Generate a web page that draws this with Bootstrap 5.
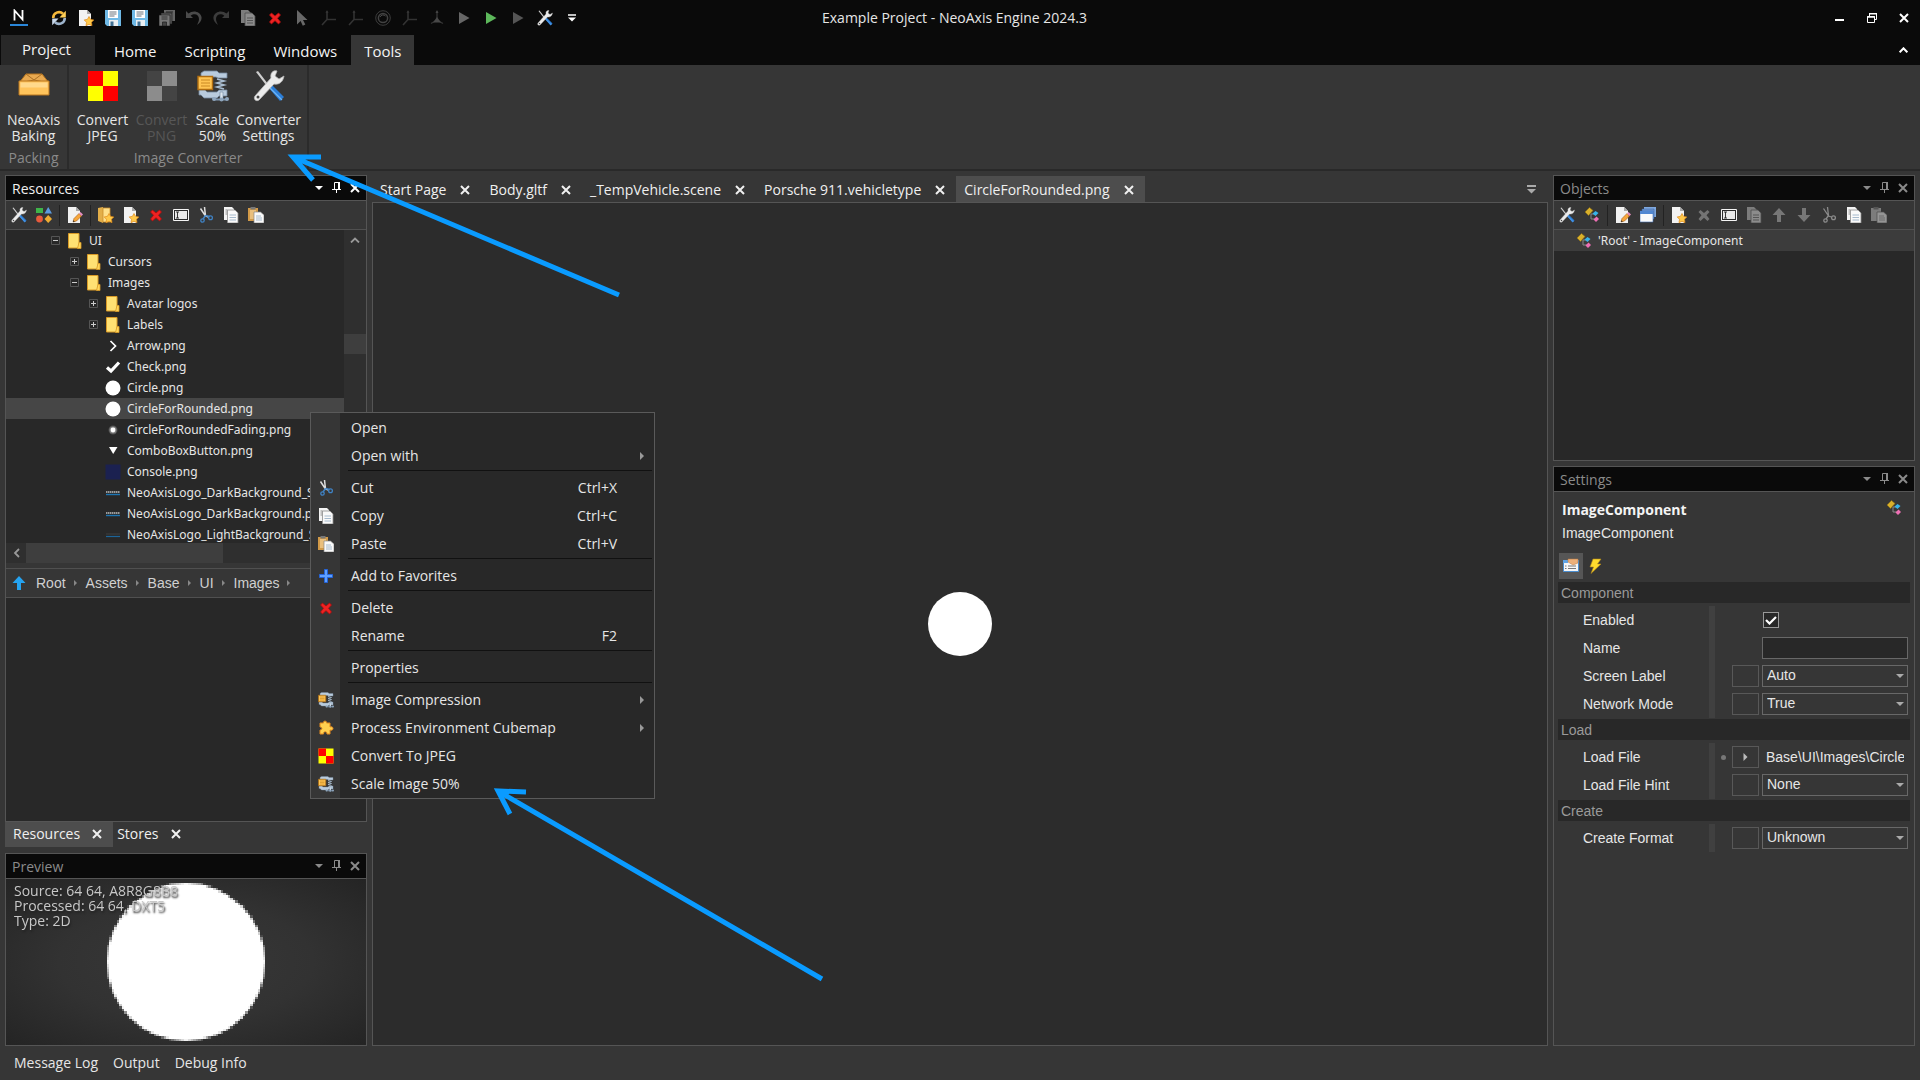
<!DOCTYPE html>
<html lang="en" data-bs-theme="dark">
<head>
<meta charset="utf-8">
<meta name="viewport" content="width=device-width, initial-scale=1">
<title>Example Project - NeoAxis Engine 2024.3</title>
<link href="https://cdn.jsdelivr.net/npm/bootstrap@5.3.0/dist/css/bootstrap.min.css" rel="stylesheet">
<style>
:root{--bg:#363636;--dark:#282828;--black:#0a0a0a;--line:#555;--fg:#e6e6e6;--dim:#8a8a8a}
body{background:var(--bg);color:var(--fg);font-family:"Open Sans","Noto Sans",sans-serif;font-size:14px;line-height:20px;min-height:100vh;overflow:hidden}
a{color:inherit;text-decoration:none}
button{background:none;border:0;padding:0;color:inherit;font:inherit}
svg{display:block;flex:none}
.i16{width:16px;height:16px}
.i32{width:32px;height:32px}
.defs{position:absolute;width:0;height:0}
.ibtn{display:flex;align-items:center;justify-content:center;flex:none}
/* title */
.titlebar{background:var(--black);height:35px}
.titlebar .side{flex:1 1 0}
.titlebar .ibtn{width:27px;height:34px}
.titlebar .wbtns .ibtn{width:32px}
.quick{padding-left:5px}
.quick .logo{margin-right:13px}
.menubar{background:var(--black);height:30px;font-size:15px}
.menubar .rtab{padding:2px 14px 0;height:30px;color:#f4f4f4;display:flex;align-items:center}
.menubar .rproject{background:#282828;width:94px;margin:0 5px 0 1px;padding:0 3px 2px 0;justify-content:center}
.menubar .ractive{background:var(--bg);padding:2px 13px 0}
/* ribbon */
.ribbon{height:106px;border-bottom:2px solid #292929}
.rgroup{border-right:2px solid #2b2b2b;padding:5px 4px 0}
.rgroup .rbtn{display:flex;flex-direction:column;align-items:center;line-height:16px;gap:10px;text-align:center;height:79px}
.rgroup .rname{color:var(--dim);text-align:center;line-height:18px}
.w59{width:59px}.w43{width:43px}.w69{width:69px}
.off{color:#575757}
/* docks */
.dock{width:362px;flex:none}
.workarea{padding:4px 5px 0;gap:5px}
.panel{border:1px solid var(--line);display:flex;flex-direction:column;min-height:0}
.gapped{margin-top:5px}
.objects{flex:0 0 286px}
.phead{background:var(--black);height:25px;border-bottom:1px solid var(--line);padding:0 2px 0 6px;color:var(--dim);display:flex;align-items:center}
.phead>span{padding-top:2px}
.phead.on{color:#f0f0f0}
.phead .ibtn{width:18px;height:22px}
.phead.on .ibtn{color:#fff}
.tools{height:29px;border-bottom:1px solid #505050;display:flex;align-items:center}
.tools .ibtn{width:25px;height:26px}
.tsep{width:6px;height:21px;display:flex;justify-content:center}
.tsep::before{content:"";width:1px;background:#222}
/* tree */
.treewrap{height:313px;background:var(--dark)}
.tree{overflow:hidden;font:12px/21px "Noto Sans",sans-serif}
.trow{height:21px;display:flex;align-items:center;white-space:nowrap}
.trow.sel{background:#464646}
.trow svg{margin-right:6px}
.trow .exp{width:9px;height:9px;margin-right:7px;margin-left:1px}
.l1{padding-left:44px}.l2{padding-left:63px}.l3{padding-left:82px}.lf{padding-left:99px}
.vscroll{width:22px;background:#2f2f2f;flex:none}
.vthumb{height:20px;background:#3e3e3e;margin-top:84px}
.sbtn{min-width:20px;height:20px}
.hscroll{height:20px;background:#2f2f2f}
.hthumb{width:197px;background:#3e3e3e}
.crumbs{height:30px;margin-top:5px;border-top:1px solid #505050;border-bottom:1px solid #505050;padding-left:5px;font:14px/28px "Liberation Sans",sans-serif;color:#d0d0d0}
.crumbs a{margin-left:9px}
.crumbs .cs{margin-left:8px}
.lower{background:var(--dark)}
.dtab{display:flex;align-items:center;height:26px;padding:2px 11px 0 8px;gap:14px;color:#f0f0f0;flex:none}
.dtab.act{background:#4d4d4d}
.bottomtabs{margin-bottom:1px}
.bottomtabs .dtab{height:25px;padding-top:0;padding-bottom:2px;gap:12px}
.bottomtabs .dtab+.dtab{padding-left:4px}
.doctabs{height:27px;padding-top:1px}
.viewer{border:1px solid var(--line);background:#2c2c2c}
.disc{width:64px;height:64px;background:#fff;border-radius:50%}
.preview{height:166px;position:relative;background:radial-gradient(ellipse at center,#383838 0,#323232 50%,#242424 100%)}
.preview canvas{width:158px;height:158px;image-rendering:pixelated}
.pinfo{position:absolute;left:8px;top:4px;line-height:15px;color:#c8c8c8;text-shadow:1px 2px 2px #222}
.statusbar{height:34px;padding:0 14px;gap:15px}
/* settings */
.sbody{font:14px/18px "Liberation Sans",sans-serif}
.stitle{font:bold 14px/20px "Open Sans",sans-serif;color:#f4f4f4}
.shead{padding:8px 12px 0 8px}
.modes{padding:11px 0 3px 5px}
.modes .ibtn{width:24px;height:26px}
.modes .on{background:#565656}
.cat{background:#282828;height:21px;line-height:22px;color:#9a9a9a;margin:0 4px 3px 4px;padding-left:3px}
.props{margin-bottom:1px}
.prow{height:28px;display:flex;align-items:center}
.prow .plabel{width:155px;padding-left:29px;flex:none}
.pdiv{width:6px;background:#404040;align-self:stretch;flex:none}
.pmark{width:17px;display:flex;justify-content:center;flex:none}
.pbtn{width:27px;height:22px;border:1px solid #585858;margin-right:3px;flex:none;display:flex;align-items:center;justify-content:center}
.pbtn.hid{visibility:hidden}
.fld{height:22px;border:1px solid #686868;border-radius:0;color:#e6e6e6;background:#363636;padding:0 4px 2px;font:14px/18px "Liberation Sans",sans-serif;appearance:none;width:100%;display:block}
.pval{flex:1;margin-right:6px;min-width:0;position:relative}
.pval svg{position:absolute;right:4px;top:9px}
input.fld{background:#282828}
input.fld.bare{border:0;background:none;padding-bottom:0}
.chk{appearance:none;width:16px;height:16px;border:1px solid #999;background:#282828;margin:0 0 0 1px;display:block}
.pval .tick{position:absolute;left:3px;right:auto;top:4px;pointer-events:none}
.objrow{background:#3c3c3c;height:21px;font:12px/21px "Noto Sans",sans-serif;padding-left:22px;gap:6px}
/* context menu */
.ctx{position:absolute;left:310px;top:412px;width:345px;border:1px solid #5a5a5a;background:linear-gradient(90deg,#363636 29px,#282828 29px);padding:1px 0 0}
.citem{height:28px;width:100%;display:flex;align-items:center;text-align:left;padding:0 10px 1px 7px}
.citem .ci{width:16px;height:16px;margin-right:17px;flex:none}
.citem .key{margin-right:27px}
.citem span{padding-top:1px}
.csep{height:4px;margin:0 2px 0 37px}
.csep::before{content:"";display:block;height:1px;background:#111}
.notes{position:absolute;left:0;top:0;pointer-events:none}
</style>
<script src="https://cdn.jsdelivr.net/npm/bootstrap@5.3.0/dist/js/bootstrap.bundle.min.js"></script>
</head>
<body class="d-flex flex-column">
<svg class="defs" aria-hidden="true">
<symbol id="refresh" viewBox="0 0 16 16"><path d="M2.200 8a5.800 5.800 0 0 1 9.800-4.200" fill="none" stroke="#f5b93c" stroke-width="2.600"/><path d="M14.800.8v6.700H8.500z" fill="#ffcf57"/><path d="M13.800 8a5.800 5.800 0 0 1-9.800 4.200" fill="none" stroke="#9db3cc" stroke-width="2.600"/><path d="M1.200 15.200V8.500h6.300z" fill="#c9d8ea"/></symbol>
<symbol id="page" viewBox="0 0 16 16"><path d="M1 0h8l4 4v12H1z" fill="#f2f2f2"/><path d="M9 0v4h4z" fill="#a9a9a9"/></symbol>
<symbol id="star" viewBox="0 0 16 16"><path d="M11 6.500l1.600 2.900 3.200.5-2.300 2.400.5 3.400-3-1.400-3 1.400.5-3.400-2.300-2.400 3.200-.5z" fill="#ffc94a" stroke="#e08a1a" stroke-width=".7"/></symbol>
<symbol id="newpage" viewBox="0 0 16 16"><use href="#page"/><use href="#star"/></symbol>
<symbol id="editpage" viewBox="0 0 16 16"><use href="#page"/><path d="M6 15l1-3.500 5-5 2.500 2.500-5 5z" fill="#f7a63b" stroke="#a25c12" stroke-width=".6"/><path d="M12 6.500l1.500-1.500L16 7.500 14.500 9z" fill="#e78fc0"/><path d="M6 15l.5-1.800 1.300 1.300z" fill="#222"/></symbol>
<symbol id="save" viewBox="0 0 16 16"><path d="M0 0h16v16H2l-2-2z" fill="#6fb9e6"/><path d="M3 0h10v8H3z" fill="#fff"/><path d="M4.500 2h7M4.500 4h7M4.500 6h5" stroke="#5a6570" stroke-width=".9"/><path d="M4 10h9v6H4z" fill="#e9eef2"/><path d="M5.500 11.500h3V16h-3z" fill="#3f6f92"/></symbol>
<symbol id="saveall" viewBox="0 0 16 16"><path d="M5 0h11v11H5z" fill="#666"/><path d="M7 2h7" stroke="#222"/><path d="M2 3h11v11H2z" fill="#5c5c5c" stroke="#151515" stroke-width=".6"/><path d="M0 5h11v11H0z" fill="#777" stroke="#151515" stroke-width=".6"/><path d="M2.500 7h6M2.500 9h6M3.500 12h4v4h-4z" stroke="#222" fill="#444" stroke-width=".8"/></symbol>
<symbol id="undo" viewBox="0 0 16 16"><path d="M0 1v7h7L4.700 5.700C8 3 13 4 13 9c0 2-1 4-2 6 3-2 5-5 4.500-8C14.500 1.500 7-.5 2.500 3.500z" fill="#4a4a4a"/></symbol>
<symbol id="redo" viewBox="0 0 16 16"><path transform="matrix(-1 0 0 1 16 0)" d="M0 1v7h7L4.700 5.700C8 3 13 4 13 9c0 2-1 4-2 6 3-2 5-5 4.500-8C14.500 1.500 7-.5 2.500 3.500z" fill="#3c3c3c"/></symbol>
<symbol id="copyoff" viewBox="0 0 16 16"><path d="M1 0h7l3 3v10H1z" fill="#7c7c7c"/><path d="M5 3h7l3 3v10H5z" fill="#8c8c8c" stroke="#4b4b4b" stroke-width=".8"/><path d="M7 8h6M7 10.500h6M7 13h6" stroke="#555"/></symbol>
<symbol id="copy" viewBox="0 0 16 16"><path d="M1 0h8l2 2v11H1z" fill="#f4f4f4"/><path d="M2.500 3h2M2.500 5h2M2.500 7h2" stroke="#8c8c8c"/><path d="M4.500 3h7.500l3 3v10H4.500z" fill="#fafafa" stroke="#8b8b8b" stroke-width=".8"/><path d="M6.500 8h6.500M6.500 10.500h6.500M6.500 13h6.500" stroke="#9cb2c7" stroke-width=".9"/></symbol>
<symbol id="paste" viewBox="0 0 16 16"><path d="M0 1h10v13H0z" fill="#d29a48"/><path d="M2 3h6v9H2z" fill="#e9bf7d"/><path d="M2.500 0h5v2.500h-5z" fill="#777"/><path d="M6 5h6.500L16 8v8H6z" fill="#fafafa" stroke="#888" stroke-width=".7"/><path d="M8 9h5M8 11h6M8 13h6" stroke="#9cb2c7" stroke-width=".9"/></symbol>
<symbol id="pasteoff" viewBox="0 0 16 16"><path d="M0 1h10v13H0z" fill="#7c7c7c"/><path d="M2.500 0h5v2.500h-5z" fill="#555"/><path d="M6 5h6.500L16 8v8H6z" fill="#959595" stroke="#4c4c4c" stroke-width=".7"/><path d="M8 9h5M8 11h6M8 13h6" stroke="#666" stroke-width=".9"/></symbol>
<symbol id="del" viewBox="0 0 16 16"><path d="M2.500 5l2-2L8 6l3.500-3 2 2-3 3.300 3 3.700-2 2L8 10.700 4.500 14l-2-2 3-3.700z" fill="#ee2222" stroke="#a80c0c" stroke-width=".8"/></symbol>
<symbol id="deloff" viewBox="0 0 16 16"><path d="M2.500 5l2-2L8 6l3.500-3 2 2-3 3.300 3 3.700-2 2L8 10.700 4.500 14l-2-2 3-3.700z" fill="#747474"/></symbol>
<symbol id="cursor" viewBox="0 0 16 16"><path d="M3 0l10.500 10H9l2.300 4.600-2.500 1.200-2.200-4.700L3 14.500z" fill="#686868"/></symbol>
<symbol id="axis" viewBox="0 0 16 16"><path d="M6 1v8.500h9M6 9.500L1 15" fill="none" stroke="#333" stroke-width="1.600"/><path d="M4.500 3L6 0l1.500 3z" fill="#333"/></symbol>
<symbol id="axis3" viewBox="0 0 16 16"><path d="M8 1v9l6 3.500M8 10l-6 3.500" fill="none" stroke="#333" stroke-width="1.400"/><path d="M8 7l4 5.500H4z" fill="#484848"/><path d="M6.500 3L8 0l1.500 3z" fill="#444"/></symbol>
<symbol id="rings" viewBox="0 0 16 16"><circle cx="8" cy="8" r="7.300" fill="none" stroke="#3c3c3c"/><circle cx="8" cy="8" r="4.600" fill="none" stroke="#424242" stroke-width="1.500"/><path d="M5 7a3.300 3.300 0 0 1 5.500-1" stroke="#505050" fill="none"/></symbol>
<symbol id="play" viewBox="0 0 16 16"><path d="M3 2l10.500 6L3 14z" fill="currentColor"/></symbol>
<symbol id="wrench" viewBox="0 0 32 32"><path d="M3 2l2-1 10 13-2 1z" fill="#cfcfcf"/><path d="M15 17l3-3 13 13-4 4z" fill="#2b7ed8"/><path d="M17 18l12 12" stroke="#6fb4f2" stroke-width="1.300"/><path d="M24 1c-4-1-7 2-6 7L2 26c-2 3 1 6 4 4L21 14c5 1 9-2 10-8l-5 3-4-3z" fill="#ececec" stroke="#bbb" stroke-width=".8"/><circle cx="5" cy="27" r="1.500" fill="#444"/></symbol>
<symbol id="shapes" viewBox="0 0 16 16"><path d="M0 1h7v5H0z" fill="#3fb44a"/><path d="M8.500 6.500L12.200 0 16 6.500z" fill="#5b9be0"/><circle cx="3.500" cy="12" r="3.400" fill="#e85a3c"/><path d="M12.200 8L16 12l-3.800 4-3.700-4z" fill="#efac32"/></symbol>
<symbol id="folder" viewBox="0 0 16 16"><path d="M1.500.5h10.500v14.500H1.500z" fill="#ffe173" stroke="#d99a27"/><path d="M12 9.500h2v6h-3.500z" fill="#ffd75a" stroke="#d99a27" stroke-width=".8"/></symbol>
<symbol id="newfolder" viewBox="0 0 16 16"><path d="M0 1l5-1v16l-5-2z" fill="#e3ae48"/><path d="M5 1h7v14H5z" fill="#ffe08a" stroke="#c98e2c" stroke-width=".8"/><use href="#star"/></symbol>
<symbol id="rename" viewBox="0 0 16 16"><path d="M.5 2.500h15v11H.5z" fill="#2a2a2a" stroke="#f5f5f5"/><path d="M2 4h12v8H2z" fill="#e9e9e9"/><path d="M3 5h3M4.500 5v6M3 11h3" stroke="#222" stroke-width=".9"/></symbol>
<symbol id="cut" viewBox="0 0 16 16"><path d="M2.500 1.500L7.500 9M6.500 0l1 9 3 1" stroke="#dedede" stroke-width="1.500" fill="none"/><path d="M7.500 8.500L5 12M7.500 8.500l4 1" stroke="#3f82c4" stroke-width="1.600"/><circle cx="4.500" cy="13.500" r="1.700" fill="none" stroke="#3f82c4" stroke-width="1.300"/><circle cx="12.500" cy="10.800" r="1.900" fill="none" stroke="#3f82c4" stroke-width="1.300"/></symbol>
<symbol id="cutoff" viewBox="0 0 16 16"><path d="M2.500 1.500L7.500 9M6.500 0l1 9 3 1M7.500 8.500L5 12" stroke="#8b8b8b" stroke-width="1.300" fill="none"/><circle cx="4.500" cy="13.500" r="1.700" fill="none" stroke="#8b8b8b" stroke-width="1.300"/><circle cx="12.500" cy="10.800" r="1.900" fill="none" stroke="#8b8b8b" stroke-width="1.300"/></symbol>
<symbol id="comp" viewBox="0 0 16 16"><path d="M7 7v5h5M7 7l3 0" stroke="#888" fill="none"/><path d="M1 5l4.500-4.500L9 3.500 4.500 8.500z" fill="#d9b02c" stroke="#8f7010" stroke-width=".6"/><path d="M8.500 6.500L11.500 4l3 2-3 3z" fill="#37b4ea"/><path d="M9.500 12.500l3-3L15 12l-3 3z" fill="#ee6fb4"/></symbol>
<symbol id="windows" viewBox="0 0 16 16"><path d="M4 0h12v10H4z" fill="#7fa8df"/><path d="M2 2h12v10H2z" fill="#6b97d6" stroke="#3a5e94" stroke-width=".5"/><path d="M0 4h13v11H0z" fill="#fbfbfb" stroke="#3f6cae" stroke-width=".6"/><path d="M0 4h13v3H0z" fill="#5288d2"/></symbol>
<symbol id="up" viewBox="0 0 16 16"><path d="M8 1l6.500 7H10v7H6V8H1.500z" fill="currentColor"/></symbol>
<symbol id="down" viewBox="0 0 16 16"><path d="M8 15l6.500-7H10V1H6v7H1.500z" fill="currentColor"/></symbol>
<symbol id="checker" viewBox="0 0 32 32"><path d="M1 1h30v30H1z" fill="#ff0"/><path d="M1 1h15v15H1zM16 16h15v15H16z" fill="red"/></symbol>
<symbol id="checkeroff" viewBox="0 0 32 32"><path d="M1 1h30v30H1z" fill="#8c8c8c"/><path d="M1 1h15v15H1zM16 16h15v15H16z" fill="#444"/></symbol>
<symbol id="box" viewBox="0 0 32 32"><path d="M1 13L8 4h16l7 9z" fill="#e8a950" stroke="#b9771f"/><path d="M8 4l8 6 8-6M1 13l15-3 15 3" fill="none" stroke="#a96f24"/><path d="M1 11h30v14H1z" fill="#ffc45c" stroke="#b9771f"/><path d="M2.500 12.500h27v5h-27z" fill="#ffd98c"/></symbol>
<symbol id="clamp" viewBox="0 0 32 32"><path d="M4 6V3l3-2h13l2 2h8v5h-9l-2-1H6z" fill="#b9cbdd" stroke="#73899f" stroke-width=".8"/><path d="M2 20h6l2 2h10l2-2h8v6h-8l-2 2H7l-3-3H2z" fill="#b9cbdd" stroke="#73899f" stroke-width=".8"/><path d="M20 9l7 2-7 2 7 2-7 2 7 2" fill="none" stroke="#a9bdd0" stroke-width="1.700"/><path d="M23 22h3v7h-3z" fill="#dce6ef" stroke="#6f879f" stroke-width=".6"/><path d="M17 29.500h13" stroke="#7e97b1" stroke-width="2"/><circle cx="17" cy="29" r="2" fill="#8fa6bd"/><circle cx="24.500" cy="29.500" r="2" fill="#8fa6bd"/><circle cx="30" cy="29" r="2" fill="#8fa6bd"/><path d="M1 6.500h14.500v13H1z" fill="#ffc553" stroke="#b06d10" stroke-width="1.400"/><path d="M4 10h9M4 13h9M4 16h9" stroke="#c98a25" stroke-width="1.200"/></symbol>
<symbol id="plus" viewBox="0 0 16 16"><path d="M6.500 1.500h3v5h5v3h-5v5h-3v-5h-5v-3h5z" fill="#5ea0ff" stroke="#2463d8"/></symbol>
<symbol id="puzzle" viewBox="0 0 16 16"><path d="M2 3h3.500C4.500.5 9.500.5 8.500 3H12v4c4-1.500 4 4.500 0 3v4H9c.5-3-4-3-3.500 0H2v-4c2.500 0 2.500-3 0-3z" fill="#ffd04f" stroke="#e38a20"/></symbol>
<symbol id="bolt" viewBox="0 0 16 16"><path d="M6 1h8l-3.500 5H14L4 15.500 6.500 9H3z" fill="#ffdc2e" stroke="#b3861a" stroke-width=".6"/></symbol>
<symbol id="list" viewBox="0 0 16 16"><path d="M.5 2.500h15v11H.5z" fill="#f7f7f7" stroke="#4b8ed0"/><path d="M0 2h5v3H0z" fill="#5fa4e6"/><path d="M5 1h10v4l-5 2-5-3z" fill="#edb07a" stroke="#b87b43" stroke-width=".5"/><path d="M2 8h1.500M5 8h8M2 10.500h1.500M5 10.500h8" stroke="#777"/></symbol>
<symbol id="x" viewBox="0 0 10 10"><path d="M1 1l8 8M9 1L1 9" stroke="currentColor" stroke-width="2"/></symbol>
<symbol id="pin" viewBox="0 0 10 12"><path d="M2.500 7V.5h5V7M0 7.500h9M4.500 8v3" stroke="currentColor" fill="none"/><path d="M6 0h2v7H6z" fill="currentColor"/></symbol>
<symbol id="tri" viewBox="0 0 8 4"><path d="M0 0h8L4 4z" fill="currentColor"/></symbol>
<symbol id="rtri" viewBox="0 0 4 8"><path d="M0 0l4 4-4 4z" fill="currentColor"/></symbol>
<symbol id="exp" viewBox="0 0 9 9"><path d="M.5.5h8v8h-8z" fill="none" stroke="#555"/><path d="M2 4.500h5M4.500 2v5" stroke="#ccc"/></symbol>
<symbol id="col" viewBox="0 0 9 9"><path d="M.5.5h8v8h-8z" fill="none" stroke="#555"/><path d="M2 4.500h5" stroke="#ccc"/></symbol>
<symbol id="f-arrow" viewBox="0 0 16 16"><path d="M5.500 3l5 5-5 5" fill="none" stroke="#fff" stroke-width="1.700"/></symbol>
<symbol id="f-check" viewBox="0 0 16 16"><path d="M2 8.500l4 3.500 8-8.500" fill="none" stroke="#fff" stroke-width="3.200"/></symbol>
<symbol id="f-circle" viewBox="0 0 16 16"><circle cx="8" cy="8" r="7.500" fill="#fff"/></symbol>
<symbol id="f-fade" viewBox="0 0 16 16"><circle cx="8" cy="8" r="4.500" fill="#777" opacity=".5"/><circle cx="8" cy="8" r="3.500" fill="#aaa" opacity=".6"/><circle cx="8" cy="8" r="2.400" fill="#fff"/></symbol>
<symbol id="f-tri" viewBox="0 0 16 16"><path d="M4 4h8.500L8.200 11z" fill="#fff"/></symbol>
<symbol id="f-con" viewBox="0 0 16 16"><path d="M.5.500h15v15H.5z" fill="#1b2150"/></symbol>
<symbol id="f-logo" viewBox="0 0 16 16"><path d="M1 7h14" stroke="#999" stroke-width="2" stroke-dasharray="1.500 .5"/><path d="M1 9.500h14" stroke="#1d75b3" stroke-width="1.400"/></symbol>
<symbol id="f-logo2" viewBox="0 0 16 16"><path d="M1 7h14" stroke="#333" stroke-width="2"/><path d="M1 9.500h14" stroke="#1d6499" stroke-width="1.200"/></symbol>
</svg>

<header>
<div class="titlebar d-flex align-items-center">
  <div class="side quick d-flex">
  <button class="ibtn logo" aria-label="NeoAxis"><svg width="18" height="18" viewBox="0 0 18 18"><path d="M4.500 11.500V1.500l8 9V1" fill="none" stroke="#fff" stroke-width="1.800"/><path d="M0 16h18" stroke="#2a86d8" stroke-width="2"/></svg></button>
  <button class="ibtn" aria-label="Refresh"><svg class="i16"><use href="#refresh"/></svg></button>
  <button class="ibtn" aria-label="New"><svg class="i16"><use href="#newpage"/></svg></button>
  <button class="ibtn" aria-label="Save"><svg class="i16"><use href="#save"/></svg></button>
  <button class="ibtn" aria-label="Save as"><svg class="i16"><use href="#save"/></svg></button>
  <button class="ibtn" aria-label="Save all"><svg class="i16"><use href="#saveall"/></svg></button>
  <button class="ibtn" aria-label="Undo"><svg class="i16"><use href="#undo"/></svg></button>
  <button class="ibtn" aria-label="Redo"><svg class="i16"><use href="#redo"/></svg></button>
  <button class="ibtn" aria-label="Duplicate"><svg class="i16"><use href="#copyoff"/></svg></button>
  <button class="ibtn" aria-label="Delete"><svg class="i16"><use href="#del"/></svg></button>
  <button class="ibtn" aria-label="Select"><svg class="i16"><use href="#cursor"/></svg></button>
  <button class="ibtn" aria-label="Move and rotate"><svg class="i16"><use href="#axis"/></svg></button>
  <button class="ibtn" aria-label="Move"><svg class="i16"><use href="#axis"/></svg></button>
  <button class="ibtn" aria-label="Rotate"><svg class="i16"><use href="#rings"/></svg></button>
  <button class="ibtn" aria-label="Scale"><svg class="i16"><use href="#axis"/></svg></button>
  <button class="ibtn" aria-label="Space"><svg class="i16"><use href="#axis3"/></svg></button>
  <button class="ibtn" aria-label="Play"><svg class="i16" color="#666"><use href="#play"/></svg></button>
  <button class="ibtn" aria-label="Run player"><svg class="i16" color="#5db85b"><use href="#play"/></svg></button>
  <button class="ibtn" aria-label="Run device"><svg class="i16" color="#555"><use href="#play"/></svg></button>
  <button class="ibtn" aria-label="Options"><svg class="i16"><use href="#wrench"/></svg></button>
  <button class="ibtn" aria-label="Customize toolbar"><svg width="8" height="8" viewBox="0 0 8 8"><path d="M0 1h8" stroke="#fff" stroke-width="1.500"/><path d="M0 3.500h8L4 7.500z" fill="#fff"/></svg></button>
  </div>
  <span class="pe-3">Example Project - NeoAxis Engine 2024.3</span>
  <div class="side d-flex wbtns text-white justify-content-end">
    <button class="ibtn" aria-label="Minimize"><svg width="10" height="10" viewBox="0 0 10 10"><path d="M0 7h9" stroke="#fff" stroke-width="2"/></svg></button>
    <button class="ibtn" aria-label="Restore"><svg width="10" height="10" viewBox="0 0 10 10"><path d="M2.500 3V.5h7v6H8" fill="none" stroke="#fff"/><path d="M.5 3.500h7v6h-7z" fill="none" stroke="#fff"/><path d="M2 .8h8M0 4h8" stroke="#fff" stroke-width="1.500"/></svg></button>
    <button class="ibtn" aria-label="Close"><svg width="10" height="10"><use href="#x"/></svg></button>
  </div>
</div>
<nav class="menubar d-flex" aria-label="Ribbon tabs">
  <a href="#" class="rtab rproject">Project</a>
  <a href="#" class="rtab">Home</a>
  <a href="#" class="rtab">Scripting</a>
  <a href="#" class="rtab">Windows</a>
  <a href="#" class="rtab ractive">Tools</a>
  <button class="ibtn ms-auto px-2 me-1" aria-label="Collapse ribbon"><svg width="9" height="6" viewBox="0 0 9 6"><path d="M.7 5.300l3.800-4 3.800 4" fill="none" stroke="#fff" stroke-width="2"/></svg></button>
</nav>
<div class="ribbon d-flex">
  <div class="rgroup">
    <button class="rbtn w59"><svg class="i32"><use href="#box"/></svg><span>NeoAxis<br>Baking</span></button>
    <div class="rname">Packing</div>
  </div>
  <div class="rgroup">
    <div class="d-flex">
      <button class="rbtn w59"><svg class="i32"><use href="#checker"/></svg><span>Convert<br>JPEG</span></button>
      <button class="rbtn w59 off" disabled><svg class="i32"><use href="#checkeroff"/></svg><span>Convert<br>PNG</span></button>
      <button class="rbtn w43"><svg class="i32"><use href="#clamp"/></svg><span>Scale<br>50%</span></button>
      <button class="rbtn w69"><svg class="i32"><use href="#wrench"/></svg><span>Converter<br>Settings</span></button>
    </div>
    <div class="rname">Image Converter</div>
  </div>
</div>
</header>

<main class="workarea d-flex flex-grow-1">
<section class="dock d-flex flex-column">
  <div class="panel flex-grow-1">
    <div class="phead on"><span class="me-auto">Resources</span>
      <button class="ibtn" aria-label="Window menu"><svg width="8" height="4"><use href="#tri"/></svg></button>
      <button class="ibtn" aria-label="Pin"><svg width="10" height="12"><use href="#pin"/></svg></button>
      <button class="ibtn" aria-label="Close"><svg width="10" height="10"><use href="#x"/></svg></button></div>
    <div class="tools">
      <button class="ibtn" aria-label="Options"><svg class="i16"><use href="#wrench"/></svg></button>
      <button class="ibtn" aria-label="Filter"><svg class="i16"><use href="#shapes"/></svg></button><span class="tsep"></span>
      <button class="ibtn" aria-label="Edit"><svg class="i16"><use href="#editpage"/></svg></button><span class="tsep"></span>
      <button class="ibtn" aria-label="New folder"><svg class="i16"><use href="#newfolder"/></svg></button>
      <button class="ibtn" aria-label="New resource"><svg class="i16"><use href="#newpage"/></svg></button>
      <button class="ibtn" aria-label="Delete"><svg class="i16"><use href="#del"/></svg></button>
      <button class="ibtn" aria-label="Rename"><svg class="i16"><use href="#rename"/></svg></button>
      <button class="ibtn" aria-label="Cut"><svg class="i16"><use href="#cut"/></svg></button>
      <button class="ibtn" aria-label="Copy"><svg class="i16"><use href="#copy"/></svg></button>
      <button class="ibtn" aria-label="Paste"><svg class="i16"><use href="#paste"/></svg></button>
    </div>
    <div class="treewrap d-flex">
      <div class="tree flex-fill">
        <div class="trow l1"><svg class="exp"><use href="#col"/></svg><svg class="i16"><use href="#folder"/></svg>UI</div>
        <div class="trow l2"><svg class="exp"><use href="#exp"/></svg><svg class="i16"><use href="#folder"/></svg>Cursors</div>
        <div class="trow l2"><svg class="exp"><use href="#col"/></svg><svg class="i16"><use href="#folder"/></svg>Images</div>
        <div class="trow l3"><svg class="exp"><use href="#exp"/></svg><svg class="i16"><use href="#folder"/></svg>Avatar logos</div>
        <div class="trow l3"><svg class="exp"><use href="#exp"/></svg><svg class="i16"><use href="#folder"/></svg>Labels</div>
        <div class="trow lf"><svg class="i16"><use href="#f-arrow"/></svg>Arrow.png</div>
        <div class="trow lf"><svg class="i16"><use href="#f-check"/></svg>Check.png</div>
        <div class="trow lf"><svg class="i16"><use href="#f-circle"/></svg>Circle.png</div>
        <div class="trow lf sel"><svg class="i16"><use href="#f-circle"/></svg>CircleForRounded.png</div>
        <div class="trow lf"><svg class="i16"><use href="#f-fade"/></svg>CircleForRoundedFading.png</div>
        <div class="trow lf"><svg class="i16"><use href="#f-tri"/></svg>ComboBoxButton.png</div>
        <div class="trow lf"><svg class="i16"><use href="#f-con"/></svg>Console.png</div>
        <div class="trow lf"><svg class="i16"><use href="#f-logo"/></svg>NeoAxisLogo_DarkBackground_S</div>
        <div class="trow lf"><svg class="i16"><use href="#f-logo"/></svg>NeoAxisLogo_DarkBackground.p</div>
        <div class="trow lf"><svg class="i16"><use href="#f-logo2"/></svg>NeoAxisLogo_LightBackground_S</div>
      </div>
      <div class="vscroll"><button class="ibtn sbtn w-100" aria-label="Scroll up"><svg width="10" height="6" viewBox="0 0 10 6"><path d="M1 5.500l4-4 4 4" fill="none" stroke="#999" stroke-width="1.800"/></svg></button><div class="vthumb"></div></div>
    </div>
    <div class="hscroll d-flex"><button class="ibtn sbtn" aria-label="Scroll left"><svg width="7" height="10" viewBox="0 0 7 10"><path d="M6 1L2 5l4 4" fill="none" stroke="#999" stroke-width="1.800"/></svg></button><div class="hthumb"></div></div>
    <nav class="crumbs d-flex align-items-center" aria-label="Path">
      <button class="ibtn" aria-label="Up"><svg class="i16" color="#25a3f0"><use href="#up"/></svg></button>
      <a href="#">Root</a><svg class="cs" width="3" height="6" color="#888"><use href="#rtri"/></svg>
      <a href="#">Assets</a><svg class="cs" width="3" height="6" color="#888"><use href="#rtri"/></svg>
      <a href="#">Base</a><svg class="cs" width="3" height="6" color="#888"><use href="#rtri"/></svg>
      <a href="#">UI</a><svg class="cs" width="3" height="6" color="#888"><use href="#rtri"/></svg>
      <a href="#">Images</a><svg class="cs" width="3" height="6" color="#888"><use href="#rtri"/></svg>
    </nav>
    <div class="lower flex-grow-1"></div>
  </div>
  <div class="d-flex bottomtabs">
    <div class="dtab act">Resources<button class="ibtn" aria-label="Close Resources"><svg width="10" height="10"><use href="#x"/></svg></button></div>
    <div class="dtab">Stores<button class="ibtn" aria-label="Close Stores"><svg width="10" height="10"><use href="#x"/></svg></button></div>
  </div>
  <div class="panel gapped flex-shrink-0">
    <div class="phead"><span class="me-auto">Preview</span>
      <button class="ibtn" aria-label="Window menu"><svg width="8" height="4"><use href="#tri"/></svg></button>
      <button class="ibtn" aria-label="Pin"><svg width="10" height="12"><use href="#pin"/></svg></button>
      <button class="ibtn" aria-label="Close"><svg width="10" height="10"><use href="#x"/></svg></button></div>
    <div class="preview d-flex align-items-center justify-content-center">
      <canvas id="pv" width="64" height="64"></canvas>
      <div class="pinfo">Source: 64 64, A8R8G8B8<br>Processed: 64 64, DXT5<br>Type: 2D</div>
    </div>
  </div>
</section>

<section class="flex-grow-1 d-flex flex-column">
  <div class="doctabs d-flex">
    <div class="dtab">Start Page<button class="ibtn" aria-label="Close"><svg width="10" height="10"><use href="#x"/></svg></button></div>
    <div class="dtab">Body.gltf<button class="ibtn" aria-label="Close"><svg width="10" height="10"><use href="#x"/></svg></button></div>
    <div class="dtab">_TempVehicle.scene<button class="ibtn" aria-label="Close"><svg width="10" height="10"><use href="#x"/></svg></button></div>
    <div class="dtab">Porsche 911.vehicletype<button class="ibtn" aria-label="Close"><svg width="10" height="10"><use href="#x"/></svg></button></div>
    <div class="dtab act">CircleForRounded.png<button class="ibtn" aria-label="Close"><svg width="10" height="10"><use href="#x"/></svg></button></div>
    <button class="ibtn ms-auto me-2 px-1" aria-label="Tab list"><svg width="9" height="9" viewBox="0 0 9 9"><path d="M0 1h9" stroke="#aaa" stroke-width="2"/><path d="M0 4h9L4.500 8.500z" fill="#aaa"/></svg></button>
  </div>
  <div class="viewer flex-grow-1 d-flex align-items-center justify-content-center"><div class="disc"></div></div>
</section>

<section class="dock d-flex flex-column">
  <div class="panel objects">
    <div class="phead"><span class="me-auto">Objects</span>
      <button class="ibtn" aria-label="Window menu"><svg width="8" height="4"><use href="#tri"/></svg></button>
      <button class="ibtn" aria-label="Pin"><svg width="10" height="12"><use href="#pin"/></svg></button>
      <button class="ibtn" aria-label="Close"><svg width="10" height="10"><use href="#x"/></svg></button></div>
    <div class="tools">
      <button class="ibtn" aria-label="Options"><svg class="i16"><use href="#wrench"/></svg></button>
      <button class="ibtn" aria-label="Components"><svg class="i16"><use href="#comp"/></svg></button><span class="tsep"></span>
      <button class="ibtn" aria-label="Edit"><svg class="i16"><use href="#editpage"/></svg></button>
      <button class="ibtn" aria-label="Settings window"><svg class="i16"><use href="#windows"/></svg></button><span class="tsep"></span>
      <button class="ibtn" aria-label="New object"><svg class="i16"><use href="#newpage"/></svg></button>
      <button class="ibtn" aria-label="Delete"><svg class="i16"><use href="#deloff"/></svg></button>
      <button class="ibtn" aria-label="Rename"><svg class="i16"><use href="#rename"/></svg></button>
      <button class="ibtn" aria-label="Duplicate"><svg class="i16"><use href="#copyoff"/></svg></button>
      <button class="ibtn" aria-label="Move up"><svg class="i16" color="#777"><use href="#up"/></svg></button>
      <button class="ibtn" aria-label="Move down"><svg class="i16" color="#777"><use href="#down"/></svg></button>
      <button class="ibtn" aria-label="Cut"><svg class="i16"><use href="#cutoff"/></svg></button>
      <button class="ibtn" aria-label="Copy"><svg class="i16"><use href="#copy"/></svg></button>
      <button class="ibtn" aria-label="Paste"><svg class="i16"><use href="#pasteoff"/></svg></button>
    </div>
    <div class="objrow d-flex align-items-center"><svg class="i16"><use href="#comp"/></svg>'Root' - ImageComponent</div>
    <div class="lower flex-grow-1"></div>
  </div>
  <div class="panel flex-grow-1 gapped">
    <div class="phead"><span class="me-auto">Settings</span>
      <button class="ibtn" aria-label="Window menu"><svg width="8" height="4"><use href="#tri"/></svg></button>
      <button class="ibtn" aria-label="Pin"><svg width="10" height="12"><use href="#pin"/></svg></button>
      <button class="ibtn" aria-label="Close"><svg width="10" height="10"><use href="#x"/></svg></button></div>
    <div class="sbody">
      <div class="shead">
        <div class="d-flex justify-content-between"><span class="stitle">ImageComponent</span><svg class="i16"><use href="#comp"/></svg></div>
        <div class="pt-1">ImageComponent</div>
      </div>
      <div class="modes d-flex">
        <button class="ibtn on" aria-label="Properties"><svg class="i16"><use href="#list"/></svg></button>
        <button class="ibtn" aria-label="Events"><svg class="i16"><use href="#bolt"/></svg></button>
      </div>
      <div class="cat">Component</div>
      <div class="props">
        <div class="prow"><label class="plabel" for="en">Enabled</label><span class="pdiv"></span><span class="pmark"></span><span class="pbtn hid"></span><div class="pval"><input id="en" type="checkbox" class="chk" checked><svg class="tick" width="12" height="9" viewBox="0 0 12 9"><path d="M1 4l3.500 3.500L11 1" fill="none" stroke="#fff" stroke-width="2.200"/></svg></div></div>
        <div class="prow"><label class="plabel" for="nm">Name</label><span class="pdiv"></span><span class="pmark"></span><span class="pbtn hid"></span><div class="pval"><input id="nm" type="text" class="fld"></div></div>
        <div class="prow"><label class="plabel" for="sl">Screen Label</label><span class="pdiv"></span><span class="pmark"></span><button class="pbtn" aria-label="Reference"></button><div class="pval"><select id="sl" class="fld"><option>Auto</option></select><svg width="8" height="4" color="#aaa"><use href="#tri"/></svg></div></div>
        <div class="prow"><label class="plabel" for="nw">Network Mode</label><span class="pdiv"></span><span class="pmark"></span><button class="pbtn" aria-label="Reference"></button><div class="pval"><select id="nw" class="fld"><option>True</option></select><svg width="8" height="4" color="#aaa"><use href="#tri"/></svg></div></div>
      </div>
      <div class="cat">Load</div>
      <div class="props">
        <div class="prow"><label class="plabel" for="lf">Load File</label><span class="pdiv"></span><span class="pmark"><svg width="5" height="5" viewBox="0 0 5 5"><circle cx="2.500" cy="2.500" r="2.500" fill="#777"/></svg></span><button class="pbtn" aria-label="Reference"><svg width="5" height="8" color="#bbb"><use href="#rtri"/></svg></button><div class="pval"><input id="lf" type="text" class="fld bare" value="Base\UI\Images\Circle"></div></div>
        <div class="prow"><label class="plabel" for="lh">Load File Hint</label><span class="pdiv"></span><span class="pmark"></span><button class="pbtn" aria-label="Reference"></button><div class="pval"><select id="lh" class="fld"><option>None</option></select><svg width="8" height="4" color="#aaa"><use href="#tri"/></svg></div></div>
      </div>
      <div class="cat">Create</div>
      <div class="props">
        <div class="prow"><label class="plabel" for="cf">Create Format</label><span class="pdiv"></span><span class="pmark"></span><button class="pbtn" aria-label="Reference"></button><div class="pval"><select id="cf" class="fld"><option>Unknown</option></select><svg width="8" height="4" color="#aaa"><use href="#tri"/></svg></div></div>
      </div>
    </div>
  </div>
</section>
</main>

<footer class="statusbar d-flex align-items-center">
  <a href="#">Message Log</a><a href="#">Output</a><a href="#">Debug Info</a>
</footer>

<div class="ctx" role="menu">
  <button class="citem" role="menuitem"><span class="ci"></span><span class="me-auto">Open</span></button>
  <button class="citem" role="menuitem"><span class="ci"></span><span class="me-auto">Open with</span><svg width="4" height="8" color="#999"><use href="#rtri"/></svg></button>
  <div class="csep"></div>
  <button class="citem" role="menuitem"><svg class="ci"><use href="#cut"/></svg><span class="me-auto">Cut</span><span class="key">Ctrl+X</span></button>
  <button class="citem" role="menuitem"><svg class="ci"><use href="#copy"/></svg><span class="me-auto">Copy</span><span class="key">Ctrl+C</span></button>
  <button class="citem" role="menuitem"><svg class="ci"><use href="#paste"/></svg><span class="me-auto">Paste</span><span class="key">Ctrl+V</span></button>
  <div class="csep"></div>
  <button class="citem" role="menuitem"><svg class="ci"><use href="#plus"/></svg><span class="me-auto">Add to Favorites</span></button>
  <div class="csep"></div>
  <button class="citem" role="menuitem"><svg class="ci"><use href="#del"/></svg><span class="me-auto">Delete</span></button>
  <button class="citem" role="menuitem"><span class="ci"></span><span class="me-auto">Rename</span><span class="key">F2</span></button>
  <div class="csep"></div>
  <button class="citem" role="menuitem"><span class="ci"></span><span class="me-auto">Properties</span></button>
  <div class="csep"></div>
  <button class="citem" role="menuitem"><svg class="ci"><use href="#clamp"/></svg><span class="me-auto">Image Compression</span><svg width="4" height="8" color="#999"><use href="#rtri"/></svg></button>
  <button class="citem" role="menuitem"><svg class="ci"><use href="#puzzle"/></svg><span class="me-auto">Process Environment Cubemap</span><svg width="4" height="8" color="#999"><use href="#rtri"/></svg></button>
  <button class="citem" role="menuitem"><svg class="ci"><use href="#checker"/></svg><span class="me-auto">Convert To JPEG</span></button>
  <button class="citem" role="menuitem"><svg class="ci"><use href="#clamp"/></svg><span class="me-auto">Scale Image 50%</span></button>
</div>

<svg class="notes" width="900" height="1000" viewBox="0 0 900 1000" fill="none" stroke="#0a9bff" stroke-width="5" aria-hidden="true">
  <path d="M293 157L619 295M321 157L293 157L313 180"/>
  <path d="M498 791L822 979M526 792L498 791L510 814"/>
</svg>
<script>
const c=document.getElementById('pv').getContext('2d');
c.fillStyle='#fff';c.beginPath();c.arc(32,32,32,0,Math.PI*2);c.fill();
</script>
</body>
</html>
